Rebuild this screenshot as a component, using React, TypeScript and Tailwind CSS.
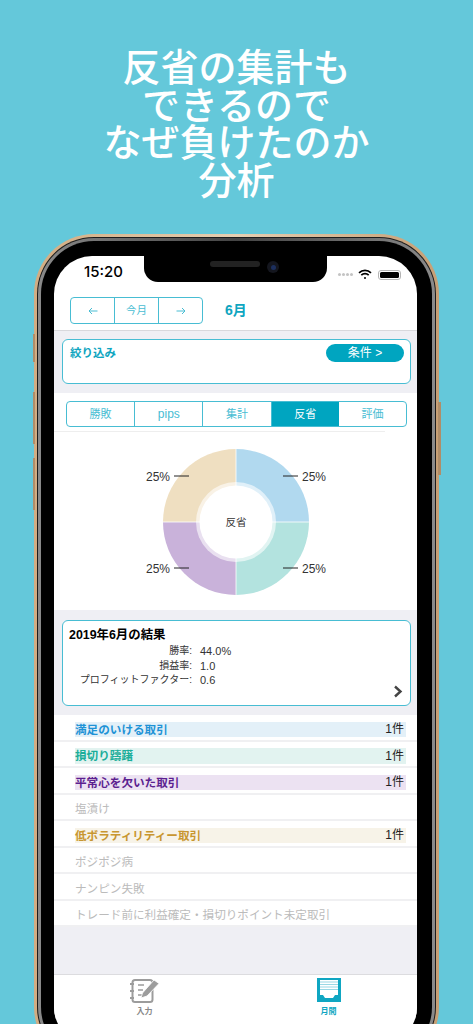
const font = { fontFamily: '"Liberation Sans", "Noto Sans CJK JP", sans-serif' };

const tabs = ["勝敗", "pips", "集計", "反省", "評価"];

const reasons = [
  { label: "満足のいける取引", text: "text-[#1f93d6]", bg: "bg-[#e3f0f8]", count: "1件" },
  { label: "損切り躊躇", text: "text-[#1bae9a]", bg: "bg-[#e2f3f0]", count: "1件" },
  { label: "平常心を欠いた取引", text: "text-[#5c1f90]", bg: "bg-[#ece2f2]", count: "1件" },
  { label: "塩漬け" },
  { label: "低ボラティリティー取引", text: "text-[#c8962f]", bg: "bg-[#f7f3e8]", count: "1件" },
  { label: "ポジポジ病" },
  { label: "ナンピン失敗" },
  { label: "トレード前に利益確定・損切りポイント未定取引" },
];

const stats = [
  ["勝率:", "44.0%"],
  ["損益率:", "1.0"],
  ["プロフィットファクター:", "0.6"],
];

function Donut() {
  return (
    <svg width="220" height="160" viewBox="0 0 220 160">
      <path d="M110 7a73 73 0 0 1 73 73h-73z" fill="#b1d9ef" />
      <path d="M183 80a73 73 0 0 1-73 73v-73z" fill="#b3e3df" />
      <path d="M110 153a73 73 0 0 1-73-73h73z" fill="#c9b2da" />
      <path d="M37 80a73 73 0 0 1 73-73v73z" fill="#efdfc1" />
      <path d="M110 7v146M37 80h146" stroke="#ffffff" strokeWidth="0.8" />
      <circle cx="110" cy="80" r="40" fill="#ffffff" fillOpacity="0.6" />
      <circle cx="110" cy="80" r="36.5" fill="#ffffff" />
      <path d="M157 34h15M157 126h15M48 34h15M48 126h15" stroke="#222222" strokeWidth="1" />
      <g fill="#333333" fontSize="12">
        <text x="176" y="38.500">25%</text>
        <text x="176" y="130.500">25%</text>
        <text x="20" y="38.500">25%</text>
        <text x="20" y="130.500">25%</text>
        <text x="110" y="84" fontSize="10.500" textAnchor="middle">反省</text>
      </g>
    </svg>
  );
}

function NotebookIcon() {
  return (
    <svg width="30" height="26" viewBox="0 0 30 26" fill="none">
      <rect x="2.500" y="2" width="20" height="22" rx="2.500" stroke="#9c9c9c" strokeWidth="2" />
      <path d="M0 6h4M0 13h4M0 20h4" stroke="#9c9c9c" strokeWidth="2" />
      <path d="M8 7h6M8 12h5M8 17h4" stroke="#9c9c9c" strokeWidth="1.600" />
      <path d="M11 20l1.500-5L24 2l5 3.500L17 18z" fill="#9c9c9c" stroke="#ffffff" strokeWidth="0.800" />
    </svg>
  );
}

function TrayIcon() {
  return (
    <svg width="24" height="24" viewBox="0 0 24 24">
      <rect width="24" height="24" fill="#0fa6c2" />
      <rect x="3" y="2" width="18" height="15" fill="#ffffff" />
      <path d="M3 4h18M3 6.500h18M3 9h18M3 11.500h18" stroke="#9ad8e5" strokeWidth="1.100" />
      <path d="M3 14h18v3h-3l-2 3H8l-2-3H3z" fill="#ffffff" />
    </svg>
  );
}

function Arrow({ flip }: { flip?: boolean }) {
  return (
    <svg width="10" height="8" viewBox="0 0 10 8" fill="none" stroke="#48bdd3" strokeWidth="1" className={flip ? "rotate-180" : ""}>
      <path d="M9.500 4H1M4 1L1 4l3 3" />
    </svg>
  );
}

export default function App() {
  return (
    <div className="relative h-[1024px] w-[473px] overflow-hidden bg-[#64c8da]" style={font}>
      <div className="h-[234px] pt-[50px]">
        <h1 className="text-center text-[38px] leading-[37.600px] font-medium text-white">
          反省の集計も
          <br />
          できるので
          <br />
          なぜ負けたのか
          <br />
          分析
        </h1>
      </div>

      <div className="relative mx-[34px] w-[405px]">
        <div className="absolute top-[168px] -right-[2px] h-[73px] w-[3px] bg-[#b08d68]" />
        <div className="absolute top-[100px] -left-[1px] h-[28px] w-[2px] bg-[#b08d68]" />
        <div className="absolute top-[158px] -left-[1px] h-[52px] w-[2px] bg-[#b08d68]" />
        <div className="absolute top-[224px] -left-[1px] h-[52px] w-[2px] bg-[#b08d68]" />

        <div className="rounded-[60px] bg-gradient-to-r from-[#d2ac82] via-[#e6cfb2] to-[#c69f75] p-[3px]">
          <div className="rounded-[57px] bg-[#1c1c1c] p-[1px]">
            <div className="rounded-[56px] bg-gradient-to-r from-[#8a8a8a] via-[#444444] to-[#8a8a8a] p-[3px]">
              <div className="rounded-[53px] bg-black px-[13px] pt-[15px] pb-[15px]">
                <div className="relative h-[789px] w-[363px] overflow-hidden rounded-[38px] bg-white">
                  {/* notch */}
                  <div className="absolute top-0 left-[90px] flex h-[26px] w-[183px] items-start justify-center gap-[7px] rounded-b-[14px] bg-black pt-[5px]">
                    <div className="ml-[18px] h-[6px] w-[50px] rounded-full bg-[#222222]" />
                    <div className="flex h-[12px] w-[12px] items-center justify-center rounded-full bg-[#14161e]">
                      <div className="h-[5px] w-[5px] rounded-full bg-[#1c2f5e]" />
                    </div>
                  </div>

                  {/* status bar */}
                  <div className="flex h-[41px] items-start justify-between pt-[6px] pr-[16px] pl-[30px]">
                    <span className="font-['Inter'] text-[15px] leading-[20px] font-medium text-black">15:20</span>
                    <div className="flex items-center gap-[5px] pt-[7px]">
                      <div className="flex gap-[1px]">
                        <span className="h-[3px] w-[3px] rounded-full bg-[#c4c4c4]" />
                        <span className="h-[3px] w-[3px] rounded-full bg-[#c4c4c4]" />
                        <span className="h-[3px] w-[3px] rounded-full bg-[#c4c4c4]" />
                        <span className="h-[3px] w-[3px] rounded-full bg-[#c4c4c4]" />
                      </div>
                      <svg width="14" height="11" viewBox="0 0 14 11" fill="none" stroke="#000000" strokeWidth="1.700">
                        <path d="M1 3.800a8.500 8.500 0 0 1 12 0" />
                        <path d="M3.300 6.200a5.200 5.200 0 0 1 7.400 0" />
                        <circle cx="7" cy="9" r="1" fill="#000000" stroke="none" />
                      </svg>
                      <div className="ml-[1px] flex h-[10px] w-[23px] rounded-[3px] border border-[#b5b5b5] p-[1px]">
                        <div className="flex-1 rounded-[1.500px] bg-black" />
                      </div>
                    </div>
                  </div>

                  {/* month nav */}
                  <div className="flex h-[34px] items-start border-b border-[#d8d8dc] pl-[16px]">
                    <div className="flex h-[27px] w-[133px] rounded-[4px] border border-[#48bdd3] text-[#48bdd3]">
                      <div className="flex w-[44px] items-center justify-center border-r border-[#48bdd3]">
                        <Arrow />
                      </div>
                      <div className="flex w-[44px] items-center justify-center border-r border-[#48bdd3] text-[10.500px]">今月</div>
                      <div className="flex flex-1 items-center justify-center">
                        <Arrow flip />
                      </div>
                    </div>
                    <div className="ml-[22px] text-[14px] leading-[27px] font-bold text-[#0ea5c0]">6月</div>
                  </div>

                  {/* filter */}
                  <div className="bg-[#efeff4] pt-[8px] pr-[6px] pb-[9px] pl-[8px]">
                    <div className="flex h-[45px] items-start justify-between rounded-[6px] border border-[#48bdd3] bg-white pt-[4px] pr-[6px] pl-[7px]">
                      <span className="text-[11.500px] leading-[18px] font-bold text-[#0ea5c0]">絞り込み</span>
                      <div className="flex h-[18px] w-[78px] items-center justify-center rounded-full bg-[#00a5c0] text-[12px] text-white">
                        条件 &gt;
                      </div>
                    </div>
                  </div>

                  {/* segments */}
                  <div className="bg-white pt-[8px]">
                    <div className="mx-[12px] flex h-[26px] w-[341px] overflow-hidden rounded-[4px] border border-[#48bdd3] text-[11px]">
                      {tabs.map((t, i) => (
                        <div
                          key={t}
                          className={
                            t === "反省"
                              ? "flex flex-1 items-center justify-center bg-[#00a5c0] text-white"
                              : i === 4
                                ? "flex flex-1 items-center justify-center text-[#48bdd3]"
                                : "flex flex-1 items-center justify-center border-r border-[#48bdd3] text-[#48bdd3]"
                          }
                        >
                          {t === "pips" ? <span className="text-[12px]">{t}</span> : t}
                        </div>
                      ))}
                    </div>
                    <div className="mt-[4px] h-[1px] w-[331px] bg-[#eeeeee]" />
                    <div className="flex h-[178px] items-start justify-center pt-[10px]">
                      <Donut />
                    </div>
                  </div>

                  {/* result */}
                  <div className="bg-[#efeff4] pt-[10px] pr-[6px] pb-[9px] pl-[8px]">
                    <div className="relative h-[86px] rounded-[6px] border border-[#48bdd3] bg-white pt-[6px] pl-[6px]">
                      <div className="text-[12.400px] leading-[17px] font-bold text-black">2019年6月の結果</div>
                      {stats.map(([k, v]) => (
                        <div key={k} className="flex h-[14.500px] text-[11px] leading-[14.500px] text-[#333333]">
                          <span className="w-[123px] text-right text-[10px]">{k}</span>
                          <span className="ml-[8px]">{v}</span>
                        </div>
                      ))}
                      <svg className="absolute right-[7px] bottom-[7px]" width="10" height="13" viewBox="0 0 10 13" fill="none">
                        <path d="M2 1.500l5.500 5-5.500 5" stroke="#444444" strokeWidth="2.400" />
                      </svg>
                    </div>
                  </div>

                  {/* reason list */}
                  {reasons.map((r) => (
                    <div key={r.label} className="flex h-[26.500px] items-center border-b-2 border-[#f0f0f2] bg-white pt-[4px] pr-[11px] pl-[21px]">
                      <div className={`flex h-[15.500px] flex-1 items-center justify-between pr-[2px] text-[11.600px] ${r.bg ?? ""}`}>
                        <span className={r.text ? `font-bold ${r.text}` : "text-[#bbbbbb]"}>{r.label}</span>
                        {r.count && <span className="text-[12px] text-[#222222]">{r.count}</span>}
                      </div>
                    </div>
                  ))}

                  <div className="h-[47px] bg-[#efeff4]" />

                  {/* tab bar */}
                  <div className="flex border-t border-[#dcdcdf] bg-white pt-[3px]">
                    <div className="flex w-[181px] flex-col items-center">
                      <NotebookIcon />
                      <span className="mt-[1px] text-[8px] leading-[14px] font-bold text-[#888888]">入力</span>
                    </div>
                    <div className="flex w-[182px] flex-col items-center pl-[5px]">
                      <TrayIcon />
                      <span className="mt-[3px] text-[8px] leading-[14px] font-bold text-[#0fa6c2]">月間</span>
                    </div>
                  </div>
                </div>
              </div>
            </div>
          </div>
        </div>
      </div>
    </div>
  );
}
